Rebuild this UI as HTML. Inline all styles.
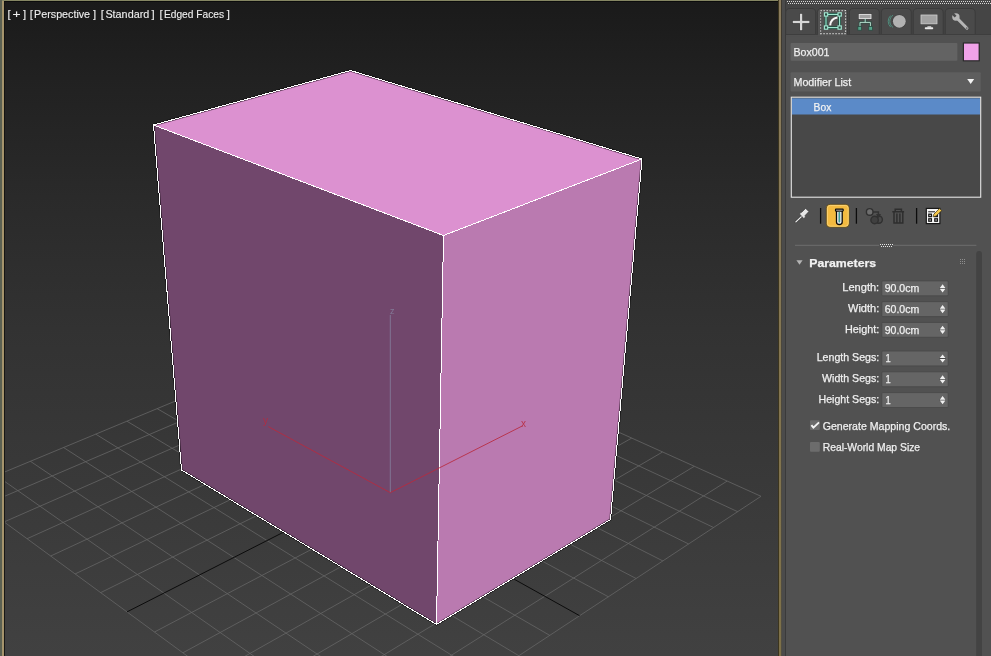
<!DOCTYPE html>
<html><head><meta charset="utf-8"><title>3ds Max - Box</title>
<style>
html,body{margin:0;padding:0;}
body{width:991px;height:656px;overflow:hidden;background:#515151;position:relative;font-family:"Liberation Sans",sans-serif;}
svg{position:absolute;left:0;top:0;display:block;will-change:transform;}
</style></head><body>
<svg id="panel" width="991" height="656" viewBox="0 0 991 656">
<rect x="781.3" y="0" width="3.7" height="656" fill="#4b4b4b"/>
<rect x="785" y="0" width="1" height="656" fill="#3a3a3a"/>
<rect x="786" y="0" width="205" height="656" fill="#515151"/>
<rect x="786" y="0" width="205" height="35" fill="#454545"/>
<g fill="#d8d8d8"><rect x="787" y="1" width="1" height="1"/><rect x="788" y="3" width="1" height="1"/><rect x="789" y="1" width="1" height="1"/><rect x="790" y="3" width="1" height="1"/><rect x="791" y="1" width="1" height="1"/><rect x="792" y="3" width="1" height="1"/><rect x="793" y="1" width="1" height="1"/><rect x="794" y="3" width="1" height="1"/><rect x="795" y="1" width="1" height="1"/><rect x="796" y="3" width="1" height="1"/><rect x="797" y="1" width="1" height="1"/><rect x="798" y="3" width="1" height="1"/><rect x="799" y="1" width="1" height="1"/><rect x="800" y="3" width="1" height="1"/><rect x="801" y="1" width="1" height="1"/><rect x="802" y="3" width="1" height="1"/><rect x="803" y="1" width="1" height="1"/><rect x="804" y="3" width="1" height="1"/><rect x="805" y="1" width="1" height="1"/><rect x="806" y="3" width="1" height="1"/><rect x="807" y="1" width="1" height="1"/><rect x="808" y="3" width="1" height="1"/><rect x="809" y="1" width="1" height="1"/><rect x="810" y="3" width="1" height="1"/><rect x="811" y="1" width="1" height="1"/><rect x="812" y="3" width="1" height="1"/><rect x="813" y="1" width="1" height="1"/><rect x="814" y="3" width="1" height="1"/><rect x="815" y="1" width="1" height="1"/><rect x="816" y="3" width="1" height="1"/><rect x="817" y="1" width="1" height="1"/><rect x="818" y="3" width="1" height="1"/><rect x="819" y="1" width="1" height="1"/><rect x="820" y="3" width="1" height="1"/><rect x="821" y="1" width="1" height="1"/><rect x="822" y="3" width="1" height="1"/><rect x="823" y="1" width="1" height="1"/><rect x="824" y="3" width="1" height="1"/><rect x="825" y="1" width="1" height="1"/><rect x="826" y="3" width="1" height="1"/><rect x="827" y="1" width="1" height="1"/><rect x="828" y="3" width="1" height="1"/><rect x="829" y="1" width="1" height="1"/><rect x="830" y="3" width="1" height="1"/><rect x="831" y="1" width="1" height="1"/><rect x="832" y="3" width="1" height="1"/><rect x="833" y="1" width="1" height="1"/><rect x="834" y="3" width="1" height="1"/><rect x="835" y="1" width="1" height="1"/><rect x="836" y="3" width="1" height="1"/><rect x="837" y="1" width="1" height="1"/><rect x="838" y="3" width="1" height="1"/><rect x="839" y="1" width="1" height="1"/><rect x="840" y="3" width="1" height="1"/><rect x="841" y="1" width="1" height="1"/><rect x="842" y="3" width="1" height="1"/><rect x="843" y="1" width="1" height="1"/><rect x="844" y="3" width="1" height="1"/><rect x="845" y="1" width="1" height="1"/><rect x="846" y="3" width="1" height="1"/><rect x="847" y="1" width="1" height="1"/><rect x="848" y="3" width="1" height="1"/><rect x="849" y="1" width="1" height="1"/><rect x="850" y="3" width="1" height="1"/><rect x="851" y="1" width="1" height="1"/><rect x="852" y="3" width="1" height="1"/><rect x="853" y="1" width="1" height="1"/><rect x="854" y="3" width="1" height="1"/><rect x="855" y="1" width="1" height="1"/><rect x="856" y="3" width="1" height="1"/><rect x="857" y="1" width="1" height="1"/><rect x="858" y="3" width="1" height="1"/><rect x="859" y="1" width="1" height="1"/><rect x="860" y="3" width="1" height="1"/><rect x="861" y="1" width="1" height="1"/><rect x="862" y="3" width="1" height="1"/><rect x="863" y="1" width="1" height="1"/><rect x="864" y="3" width="1" height="1"/><rect x="865" y="1" width="1" height="1"/><rect x="866" y="3" width="1" height="1"/><rect x="867" y="1" width="1" height="1"/><rect x="868" y="3" width="1" height="1"/><rect x="869" y="1" width="1" height="1"/><rect x="870" y="3" width="1" height="1"/><rect x="871" y="1" width="1" height="1"/><rect x="872" y="3" width="1" height="1"/><rect x="873" y="1" width="1" height="1"/><rect x="874" y="3" width="1" height="1"/><rect x="875" y="1" width="1" height="1"/><rect x="876" y="3" width="1" height="1"/><rect x="877" y="1" width="1" height="1"/><rect x="878" y="3" width="1" height="1"/><rect x="879" y="1" width="1" height="1"/><rect x="880" y="3" width="1" height="1"/><rect x="881" y="1" width="1" height="1"/><rect x="882" y="3" width="1" height="1"/><rect x="883" y="1" width="1" height="1"/><rect x="884" y="3" width="1" height="1"/><rect x="885" y="1" width="1" height="1"/><rect x="886" y="3" width="1" height="1"/><rect x="887" y="1" width="1" height="1"/><rect x="888" y="3" width="1" height="1"/><rect x="889" y="1" width="1" height="1"/><rect x="890" y="3" width="1" height="1"/><rect x="891" y="1" width="1" height="1"/><rect x="892" y="3" width="1" height="1"/><rect x="893" y="1" width="1" height="1"/><rect x="894" y="3" width="1" height="1"/><rect x="895" y="1" width="1" height="1"/><rect x="896" y="3" width="1" height="1"/><rect x="897" y="1" width="1" height="1"/><rect x="898" y="3" width="1" height="1"/><rect x="899" y="1" width="1" height="1"/><rect x="900" y="3" width="1" height="1"/><rect x="901" y="1" width="1" height="1"/><rect x="902" y="3" width="1" height="1"/><rect x="903" y="1" width="1" height="1"/><rect x="904" y="3" width="1" height="1"/><rect x="905" y="1" width="1" height="1"/><rect x="906" y="3" width="1" height="1"/><rect x="907" y="1" width="1" height="1"/><rect x="908" y="3" width="1" height="1"/><rect x="909" y="1" width="1" height="1"/><rect x="910" y="3" width="1" height="1"/><rect x="911" y="1" width="1" height="1"/><rect x="912" y="3" width="1" height="1"/><rect x="913" y="1" width="1" height="1"/><rect x="914" y="3" width="1" height="1"/><rect x="915" y="1" width="1" height="1"/><rect x="916" y="3" width="1" height="1"/><rect x="917" y="1" width="1" height="1"/><rect x="918" y="3" width="1" height="1"/><rect x="919" y="1" width="1" height="1"/><rect x="920" y="3" width="1" height="1"/><rect x="921" y="1" width="1" height="1"/><rect x="922" y="3" width="1" height="1"/><rect x="923" y="1" width="1" height="1"/><rect x="924" y="3" width="1" height="1"/><rect x="925" y="1" width="1" height="1"/><rect x="926" y="3" width="1" height="1"/><rect x="927" y="1" width="1" height="1"/><rect x="928" y="3" width="1" height="1"/><rect x="929" y="1" width="1" height="1"/><rect x="930" y="3" width="1" height="1"/><rect x="931" y="1" width="1" height="1"/><rect x="932" y="3" width="1" height="1"/><rect x="933" y="1" width="1" height="1"/><rect x="934" y="3" width="1" height="1"/><rect x="935" y="1" width="1" height="1"/><rect x="936" y="3" width="1" height="1"/><rect x="937" y="1" width="1" height="1"/><rect x="938" y="3" width="1" height="1"/><rect x="939" y="1" width="1" height="1"/><rect x="940" y="3" width="1" height="1"/><rect x="941" y="1" width="1" height="1"/><rect x="942" y="3" width="1" height="1"/><rect x="943" y="1" width="1" height="1"/><rect x="944" y="3" width="1" height="1"/><rect x="945" y="1" width="1" height="1"/><rect x="946" y="3" width="1" height="1"/><rect x="947" y="1" width="1" height="1"/><rect x="948" y="3" width="1" height="1"/><rect x="949" y="1" width="1" height="1"/><rect x="950" y="3" width="1" height="1"/><rect x="951" y="1" width="1" height="1"/><rect x="952" y="3" width="1" height="1"/><rect x="953" y="1" width="1" height="1"/><rect x="954" y="3" width="1" height="1"/><rect x="955" y="1" width="1" height="1"/><rect x="956" y="3" width="1" height="1"/><rect x="957" y="1" width="1" height="1"/><rect x="958" y="3" width="1" height="1"/><rect x="959" y="1" width="1" height="1"/><rect x="960" y="3" width="1" height="1"/><rect x="961" y="1" width="1" height="1"/><rect x="962" y="3" width="1" height="1"/><rect x="963" y="1" width="1" height="1"/><rect x="964" y="3" width="1" height="1"/><rect x="965" y="1" width="1" height="1"/><rect x="966" y="3" width="1" height="1"/><rect x="967" y="1" width="1" height="1"/><rect x="968" y="3" width="1" height="1"/><rect x="969" y="1" width="1" height="1"/><rect x="970" y="3" width="1" height="1"/><rect x="971" y="1" width="1" height="1"/><rect x="972" y="3" width="1" height="1"/><rect x="973" y="1" width="1" height="1"/><rect x="974" y="3" width="1" height="1"/><rect x="975" y="1" width="1" height="1"/><rect x="976" y="3" width="1" height="1"/><rect x="977" y="1" width="1" height="1"/><rect x="978" y="3" width="1" height="1"/><rect x="979" y="1" width="1" height="1"/><rect x="980" y="3" width="1" height="1"/><rect x="981" y="1" width="1" height="1"/><rect x="982" y="3" width="1" height="1"/><rect x="983" y="1" width="1" height="1"/><rect x="984" y="3" width="1" height="1"/><rect x="985" y="1" width="1" height="1"/><rect x="986" y="3" width="1" height="1"/><rect x="987" y="1" width="1" height="1"/><rect x="988" y="3" width="1" height="1"/><rect x="989" y="1" width="1" height="1"/><rect x="990" y="3" width="1" height="1"/></g>
<path d="M785.7 35V12.8Q785.7 8.5 790.0 8.5H811.4000000000001Q815.7 8.5 815.7 12.8V35Z" fill="#4a4a4a" stroke="#3b3b3b" stroke-width="1"/><path d="M817.4 35V12.8Q817.4 8.5 821.6999999999999 8.5H843.1Q847.4 8.5 847.4 12.8V35Z" fill="#535353" stroke="#3b3b3b" stroke-width="1"/><path d="M849.3 35V12.8Q849.3 8.5 853.5999999999999 8.5H875.0Q879.3 8.5 879.3 12.8V35Z" fill="#4a4a4a" stroke="#3b3b3b" stroke-width="1"/><path d="M881.3 35V12.8Q881.3 8.5 885.5999999999999 8.5H907.0Q911.3 8.5 911.3 12.8V35Z" fill="#4a4a4a" stroke="#3b3b3b" stroke-width="1"/><path d="M913.2 35V12.8Q913.2 8.5 917.5 8.5H938.9000000000001Q943.2 8.5 943.2 12.8V35Z" fill="#4a4a4a" stroke="#3b3b3b" stroke-width="1"/><path d="M945.2 35V12.8Q945.2 8.5 949.5 8.5H970.9000000000001Q975.2 8.5 975.2 12.8V35Z" fill="#4a4a4a" stroke="#3b3b3b" stroke-width="1"/>
<rect x="786" y="34" width="205" height="1" fill="#3e3e3e"/><rect x="786" y="35" width="205" height="1.2" fill="#515151"/>
<rect x="817.9" y="33" width="29" height="3.2" fill="#535353"/>
<!-- create + -->
<g stroke="#2e2e2e" stroke-width="3.6" opacity="0.55"><line x1="792.4" y1="22.2" x2="809.8" y2="22.2"/><line x1="801.2" y1="13.6" x2="801.2" y2="30.6"/></g>
<g stroke="#d6d6d6" stroke-width="2.3"><line x1="792.8" y1="22" x2="809.4" y2="22"/><line x1="801.1" y1="13.8" x2="801.1" y2="30.2"/></g>
<!-- modify -->
<rect x="820.6" y="10.6" width="25" height="23" fill="none" stroke="#eaeaea" stroke-width="1.1" stroke-dasharray="1.1 1.9"/>
<g fill="none" stroke="#16503f" stroke-width="2.6"><rect x="826" y="14.4" width="13.6" height="13.2"/></g>
<g fill="none" stroke="#a6ecd6" stroke-width="1.1"><rect x="826" y="14.4" width="13.6" height="13.2"/></g>
<g fill="#2c4a42" stroke="#a6ecd6" stroke-width="1.1"><rect x="824.4" y="12.8" width="3.3" height="3.3"/><rect x="838" y="12.8" width="3.3" height="3.3"/><rect x="824.4" y="25.9" width="3.3" height="3.3"/><rect x="838" y="25.9" width="3.3" height="3.3"/></g>
<path d="M830.2 25.4Q830.8 18.6 837.4 17.6" fill="none" stroke="#f6f6f6" stroke-width="2"/>
<!-- hierarchy -->
<rect x="858.2" y="13.4" width="13.8" height="6.2" fill="#2c2c2c" opacity="0.7"/>
<rect x="859.2" y="14.4" width="11.8" height="4.2" fill="#a2a2a2" stroke="#e2e2e2" stroke-width="1"/>
<path d="M865.2 19V22.3M860 26.6V22.4H870.4V26.6" fill="none" stroke="#234c40" stroke-width="2.4" opacity="0.8"/>
<path d="M865.2 19V22.3M860 26.4V22.4H870.4V26.4" fill="none" stroke="#b4dccc" stroke-width="1"/>
<rect x="857.9" y="26.6" width="3.6" height="3.6" fill="#55a38a" stroke="#27483e" stroke-width="0.7"/><rect x="868.8" y="26.6" width="3.6" height="3.6" fill="#55a38a" stroke="#27483e" stroke-width="0.7"/>
<!-- motion -->
<path d="M893 15.2A7.4 7.4 0 0 0 893 27.4M890.6 15.6A8 8 0 0 0 890.6 27" fill="none" stroke="#4f9482" stroke-width="0.9"/>
<circle cx="899.3" cy="21.3" r="6.9" fill="#333" opacity="0.6"/>
<circle cx="899.3" cy="21.3" r="6.4" fill="#b2b2b2"/>
<!-- display -->
<rect x="920" y="14" width="18" height="10.8" fill="#2e2e2e" opacity="0.6"/>
<rect x="921" y="15" width="16" height="8.8" fill="#a2a2a2" stroke="#c6c6c6" stroke-width="1"/>
<rect x="927.4" y="26.2" width="3.8" height="1.4" fill="#d0d0d0"/><rect x="924.8" y="27.2" width="8.4" height="2" rx="0.8" fill="#eaeaea"/>
<!-- wrench -->
<path d="M957.2 18.4L967 28.2" stroke="#b6b6b6" stroke-width="2.9" stroke-linecap="round"/>
<circle cx="955.9" cy="17" r="3.7" fill="#b6b6b6"/>
<path d="M955.6 16.7L951.6 12.7" stroke="#4a4a4a" stroke-width="2.6"/>
<circle cx="966.8" cy="28" r="0.85" fill="#5e5e5e"/>
<!-- name field / swatch -->
<rect x="790.6" y="43" width="166.8" height="17.8" rx="1" fill="#636363"/>
<rect x="962.8" y="42.4" width="17" height="19" fill="#2a2a2a"/><rect x="964" y="43.6" width="14.6" height="16.6" fill="#f0a2e8"/>
<!-- modifier list -->
<rect x="790.6" y="72.2" width="190.2" height="19.2" rx="1" fill="#5e5e5e"/>
<path d="M967.2 79L974.2 79L970.7 84Z" fill="#f4f4f4"/>
<!-- stack -->
<rect x="791.3" y="97.2" width="189.4" height="100" fill="#484848" stroke="#e6e6e6" stroke-width="1.1"/>
<rect x="792" y="98.3" width="188" height="16.2" fill="#5b8ac8"/>
<!-- toolbar -->
<g stroke="#0c0c0c" stroke-width="1.3"><line x1="820.6" y1="208" x2="820.6" y2="223.7"/><line x1="856.4" y1="208" x2="856.4" y2="223.7"/><line x1="916.6" y1="208" x2="916.6" y2="223.7"/></g>
<rect x="826.4" y="204.4" width="22.8" height="22.8" rx="3.6" fill="#f3ba40" stroke="#4e3d14" stroke-width="0.7"/>
<rect x="827.4" y="205.4" width="20.8" height="20.8" rx="2.8" fill="none" stroke="#fad578" stroke-width="0.9"/>
<path d="M836.5 210.4V222Q836.5 224.5 839.35 224.5Q842.2 224.5 842.2 222V210.4Z" fill="#f6f6f6" stroke="#0a0a0a" stroke-width="1.3"/>
<rect x="835.5" y="209.2" width="7.7" height="1.9" rx="0.5" fill="#e8e8e8" stroke="#0a0a0a" stroke-width="1.2"/>
<rect x="838.45" y="211.8" width="1.8" height="10.8" rx="0.9" fill="#3f9a94"/>
<!-- pin -->
<path d="M795.9 221.9L801.4 216.6" stroke="#2c2c2c" stroke-width="2.6" stroke-linecap="round" opacity="0.5"/>
<path d="M795.9 221.9L801.4 216.6" stroke="#eeeeee" stroke-width="1.3" stroke-linecap="round"/>
<path d="M799.6 214L803.8 218.6L805.4 217L805 215.6L808.8 211.6L805.6 208.4L801.8 212.2L800.8 212.4Z" fill="#e6e6e6" stroke="#3a3a3a" stroke-width="0.6"/>
<!-- make unique -->
<circle cx="878.8" cy="219.6" r="3.6" fill="#494949" stroke="#303030" stroke-width="1.4"/>
<circle cx="874.6" cy="220" r="3.7" fill="#404040" stroke="#303030" stroke-width="1.4"/>
<path d="M873 212H878.4V214.6" fill="none" stroke="#323232" stroke-width="1.5"/><path d="M876 214H881L878.5 218.2Z" fill="#323232"/>
<circle cx="869.7" cy="211.9" r="3.3" fill="#6e6e6e" stroke="#303030" stroke-width="1.4"/>
<!-- trash -->
<g fill="none" stroke="#2e2e2e" stroke-width="1.5"><path d="M892.3 211.7H904.1M895.2 211.4V209.2H901.4V211.4M894 212.6V223H902.8V212.6M896.9 213.4V222.4M899.9 213.4V222.4"/></g>
<!-- configure -->
<rect x="926.3" y="208.4" width="13.6" height="15.2" fill="#f8f8f8" stroke="#181818" stroke-width="1.2"/>
<line x1="928.2" y1="211.8" x2="935" y2="211.8" stroke="#181818" stroke-width="1"/>
<g fill="#fafafa" stroke="#181818" stroke-width="1.3"><rect x="928.8" y="214.2" width="2.6" height="2.4"/><rect x="934.8" y="214.2" width="2.6" height="2.4"/><rect x="928.8" y="218.8" width="2.6" height="2.4"/><rect x="934.8" y="218.8" width="2.6" height="2.4"/></g>
<path d="M933 216.8L933.8 214.2L939.4 208.6L941.8 210.6L936 216Z" fill="#f4c84c" stroke="#3e3010" stroke-width="0.7"/>
<!-- divider -->
<rect x="795" y="244.8" width="84" height="1" fill="#6d6d6d"/><rect x="893.2" y="244.8" width="83.2" height="1" fill="#6d6d6d"/>
<g fill="#e4e4e4"><rect x="880" y="244" width="1" height="1"/><rect x="882" y="244" width="1" height="1"/><rect x="884" y="244" width="1" height="1"/><rect x="886" y="244" width="1" height="1"/><rect x="888" y="244" width="1" height="1"/><rect x="890" y="244" width="1" height="1"/><rect x="892" y="244" width="1" height="1"/><rect x="881" y="246" width="1" height="1"/><rect x="883" y="246" width="1" height="1"/><rect x="885" y="246" width="1" height="1"/><rect x="887" y="246" width="1" height="1"/><rect x="889" y="246" width="1" height="1"/><rect x="891" y="246" width="1" height="1"/></g>
<!-- scrollbar track -->
<rect x="976.2" y="251" width="5.8" height="420" rx="2.9" fill="#434343"/>
<!-- rollout header -->
<path d="M796.4 260.2H802.6L799.5 264.8Z" fill="#b4b4b4"/>
<g fill="#8e8e8e"><rect x="960" y="259" width="1" height="1"/><rect x="962" y="259" width="1" height="1"/><rect x="964" y="259" width="1" height="1"/><rect x="960" y="261" width="1" height="1"/><rect x="962" y="261" width="1" height="1"/><rect x="964" y="261" width="1" height="1"/><rect x="960" y="263" width="1" height="1"/><rect x="962" y="263" width="1" height="1"/><rect x="964" y="263" width="1" height="1"/></g>
<rect x="881.8" y="280.9" width="66.4" height="14.9" rx="1" fill="#656565" stroke="#484848" stroke-width="0.8"/><rect x="939.4" y="287.90" width="6.4" height="1" fill="#3e3e3e" opacity="0.8"/><path d="M939.8 288.00L942.6 284.30L945.4 288.00Z M939.8 288.80L942.6 292.50L945.4 288.80Z" fill="#f0f0f0"/><rect x="881.8" y="301.65" width="66.4" height="14.9" rx="1" fill="#656565" stroke="#484848" stroke-width="0.8"/><rect x="939.4" y="308.65" width="6.4" height="1" fill="#3e3e3e" opacity="0.8"/><path d="M939.8 308.75L942.6 305.05L945.4 308.75Z M939.8 309.55L942.6 313.25L945.4 309.55Z" fill="#f0f0f0"/><rect x="881.8" y="322.4" width="66.4" height="14.9" rx="1" fill="#656565" stroke="#484848" stroke-width="0.8"/><rect x="939.4" y="329.40" width="6.4" height="1" fill="#3e3e3e" opacity="0.8"/><path d="M939.8 329.50L942.6 325.80L945.4 329.50Z M939.8 330.30L942.6 334.00L945.4 330.30Z" fill="#f0f0f0"/><rect x="881.8" y="351" width="66.4" height="14.9" rx="1" fill="#656565" stroke="#484848" stroke-width="0.8"/><rect x="939.4" y="358.00" width="6.4" height="1" fill="#3e3e3e" opacity="0.8"/><path d="M939.8 358.10L942.6 354.40L945.4 358.10Z M939.8 358.90L942.6 362.60L945.4 358.90Z" fill="#f0f0f0"/><rect x="881.8" y="371.8" width="66.4" height="14.9" rx="1" fill="#656565" stroke="#484848" stroke-width="0.8"/><rect x="939.4" y="378.80" width="6.4" height="1" fill="#3e3e3e" opacity="0.8"/><path d="M939.8 378.90L942.6 375.20L945.4 378.90Z M939.8 379.70L942.6 383.40L945.4 379.70Z" fill="#f0f0f0"/><rect x="881.8" y="392.6" width="66.4" height="14.9" rx="1" fill="#656565" stroke="#484848" stroke-width="0.8"/><rect x="939.4" y="399.60" width="6.4" height="1" fill="#3e3e3e" opacity="0.8"/><path d="M939.8 399.70L942.6 396.00L945.4 399.70Z M939.8 400.50L942.6 404.20L945.4 400.50Z" fill="#f0f0f0"/>
<!-- checkboxes -->
<rect x="810" y="420.2" width="9.8" height="9.8" rx="1" fill="#6c6c6c"/>
<path d="M811.4 425.2L813.4 427.6L819 422.4" fill="none" stroke="#f6f6f6" stroke-width="1.9"/>
<rect x="810" y="442" width="9.8" height="9.8" rx="1" fill="#6c6c6c"/>
<g font-family="Liberation Sans, sans-serif" font-size="10.8" fill="#f2f2f2" stroke="#f2f2f2" stroke-width="0.25" opacity="0.99"><text x="793.5" y="55.9" textLength="36" lengthAdjust="spacingAndGlyphs" text-anchor="start" >Box001</text><text x="793.5" y="85.8" textLength="57.7" lengthAdjust="spacingAndGlyphs" text-anchor="start" >Modifier List</text><text x="813.6" y="110.7" textLength="17.7" lengthAdjust="spacingAndGlyphs" text-anchor="start" >Box</text><text x="809.2" y="266.8" textLength="66.9" lengthAdjust="spacingAndGlyphs" text-anchor="start" font-weight="bold" font-size="11.2" fill="#f4f4f4">Parameters</text><text x="879.2" y="291.2" textLength="36.9" lengthAdjust="spacingAndGlyphs" text-anchor="end" >Length:</text><text x="879.2" y="311.95" textLength="31.2" lengthAdjust="spacingAndGlyphs" text-anchor="end" >Width:</text><text x="879.2" y="332.7" textLength="34.3" lengthAdjust="spacingAndGlyphs" text-anchor="end" >Height:</text><text x="879.2" y="361.1" textLength="62.5" lengthAdjust="spacingAndGlyphs" text-anchor="end" >Length Segs:</text><text x="879.2" y="382" textLength="57.1" lengthAdjust="spacingAndGlyphs" text-anchor="end" >Width Segs:</text><text x="879.2" y="402.9" textLength="60.7" lengthAdjust="spacingAndGlyphs" text-anchor="end" >Height Segs:</text><text x="884.7" y="292.2" textLength="34.6" lengthAdjust="spacingAndGlyphs" text-anchor="start" >90.0cm</text><text x="884.7" y="312.95" textLength="34.6" lengthAdjust="spacingAndGlyphs" text-anchor="start" >60.0cm</text><text x="884.7" y="333.7" textLength="34.6" lengthAdjust="spacingAndGlyphs" text-anchor="start" >90.0cm</text><text x="885.4" y="362.1" textLength="5.2" lengthAdjust="spacingAndGlyphs" text-anchor="start" >1</text><text x="885.4" y="383.0" textLength="5.2" lengthAdjust="spacingAndGlyphs" text-anchor="start" >1</text><text x="885.4" y="403.9" textLength="5.2" lengthAdjust="spacingAndGlyphs" text-anchor="start" >1</text><text x="822.7" y="429.8" textLength="127.6" lengthAdjust="spacingAndGlyphs" text-anchor="start" >Generate Mapping Coords.</text><text x="822.7" y="451.2" textLength="97.4" lengthAdjust="spacingAndGlyphs" text-anchor="start" >Real-World Map Size</text></g>
</svg>
<svg id="vp" width="782" height="656" viewBox="0 0 782 656">
<defs>
<linearGradient id="bg" x1="0" y1="0" x2="0" y2="1"><stop offset="0.0" stop-color="#1a1a1a"/><stop offset="0.1" stop-color="#202020"/><stop offset="0.2" stop-color="#252525"/><stop offset="0.3" stop-color="#2a2a2a"/><stop offset="0.4" stop-color="#2e2e2e"/><stop offset="0.5" stop-color="#323232"/><stop offset="0.6" stop-color="#353535"/><stop offset="0.7" stop-color="#383838"/><stop offset="0.8" stop-color="#3b3b3b"/><stop offset="0.9" stop-color="#3e3e3e"/><stop offset="1.0" stop-color="#414141"/></linearGradient>
<linearGradient id="rb" x1="0" y1="0" x2="0" y2="1"><stop offset="0" stop-color="#8a7c5e"/><stop offset="1" stop-color="#7d7048"/></linearGradient>
<clipPath id="vc"><rect x="5" y="2" width="774" height="654"/></clipPath>
</defs>
<rect x="0" y="0" width="782" height="656" fill="url(#bg)"/>
<g clip-path="url(#vc)">
<g stroke="#666666" stroke-width="0.8" fill="none"><line x1="370.0" y1="320.2" x2="-39.2" y2="490.2"/><line x1="370.0" y1="320.2" x2="761.0" y2="496.3"/><line x1="392.9" y1="330.6" x2="-17.8" y2="505.8"/><line x1="345.9" y1="330.3" x2="737.7" y2="511.7"/><line x1="416.5" y1="341.2" x2="4.2" y2="521.9"/><line x1="321.1" y1="340.5" x2="713.6" y2="527.5"/><line x1="440.7" y1="352.1" x2="27.1" y2="538.7"/><line x1="295.7" y1="351.1" x2="688.7" y2="544.0"/><line x1="465.7" y1="363.3" x2="50.7" y2="556.0"/><line x1="269.6" y1="362.0" x2="662.8" y2="560.9"/><line x1="491.3" y1="374.9" x2="75.2" y2="573.9"/><line x1="242.6" y1="373.1" x2="636.1" y2="578.5"/><line x1="517.7" y1="386.8" x2="100.7" y2="592.6"/><line x1="215.0" y1="384.6" x2="608.4" y2="596.8"/><line x1="573.0" y1="411.7" x2="154.5" y2="632.0"/><line x1="157.1" y1="408.6" x2="549.8" y2="635.4"/><line x1="601.9" y1="424.7" x2="182.9" y2="652.8"/><line x1="126.9" y1="421.2" x2="518.8" y2="655.7"/><line x1="631.7" y1="438.1" x2="212.6" y2="674.5"/><line x1="95.7" y1="434.1" x2="486.6" y2="676.9"/><line x1="662.5" y1="452.0" x2="243.4" y2="697.1"/><line x1="63.6" y1="447.5" x2="453.1" y2="699.0"/><line x1="694.3" y1="466.3" x2="275.5" y2="720.7"/><line x1="30.4" y1="461.3" x2="418.2" y2="722.0"/><line x1="727.1" y1="481.1" x2="309.0" y2="745.2"/><line x1="-3.8" y1="475.5" x2="381.9" y2="745.9"/><line x1="761.0" y1="496.3" x2="344.0" y2="770.8"/><line x1="-39.2" y1="490.2" x2="344.0" y2="770.8"/></g>
<g stroke="#0c0c0c" stroke-width="1" fill="none"><line x1="544.9" y1="399.0" x2="127.0" y2="611.9"/><line x1="186.5" y1="396.5" x2="579.6" y2="615.7"/></g>
<polygon points="153.5,125 350.5,70.5 642,159 443.5,235.5" fill="#dc91d0"/>
<polygon points="153.5,125 443.5,235.5 436.5,624.5 181.5,470" fill="#71476c"/>
<polygon points="443.5,235.5 642,159 610.5,519.5 436.5,624.5" fill="#ba7ab0"/>
<polygon points="153.5,125 350.5,70.5 642,159 610.5,519.5 436.5,624.5 181.5,470" fill="none" stroke="#000" stroke-opacity="0.5" stroke-width="2.4" stroke-linejoin="round"/>
<g stroke="#ffffff" stroke-width="1" fill="none" stroke-linejoin="round" stroke-linecap="round" shape-rendering="crispEdges">
<polygon points="153.5,125 350.5,70.5 642,159 610.5,519.5 436.5,624.5 181.5,470"/>
<polyline points="153.5,125 443.5,235.5 642,159"/>
<line x1="443.5" y1="235.5" x2="436.5" y2="624.5"/>
</g>
<g opacity="0.85"><line x1="390.3" y1="492.7" x2="390.3" y2="315" stroke="#86839f" stroke-width="0.9"/>
<line x1="390.3" y1="492.7" x2="523" y2="425.6" stroke="#b82a3e" stroke-width="1"/>
<line x1="390.3" y1="492.7" x2="268.3" y2="426.6" stroke="#b82a3e" stroke-width="1"/>
<text x="521" y="427" font-family="Liberation Sans, sans-serif" font-size="10" fill="#b82a3e">x</text>
<text x="263" y="424" font-family="Liberation Sans, sans-serif" font-size="10" fill="#b82a3e">y</text>
<text x="390" y="314" font-family="Liberation Sans, sans-serif" font-size="9" fill="#86839f">z</text></g>
</g>
<rect x="0" y="0" width="2" height="656" fill="#5c6152"/>
<rect x="2" y="0" width="2.2" height="656" fill="#a5946c"/>
<rect x="4.2" y="1" width="0.8" height="656" fill="#0a0a0a"/>
<rect x="2" y="0" width="779" height="1" fill="#858663"/>
<rect x="4.2" y="1" width="775" height="1" fill="#0c0c0c"/>
<rect x="778" y="0" width="1" height="656" fill="#3c351e"/><rect x="779" y="0" width="2.3" height="656" fill="url(#rb)"/>
<g font-family="Liberation Sans, sans-serif" font-size="11.3" fill="#f0f0f0" stroke="#f0f0f0" stroke-width="0.12" opacity="0.99"><text y="17.9"><tspan x="7.4">[</tspan><tspan x="12.6" textLength="8.1" lengthAdjust="spacingAndGlyphs">+</tspan><tspan x="22.9">]</tspan></text><text y="17.9"><tspan x="29.7">[</tspan><tspan x="34.1" textLength="56" lengthAdjust="spacingAndGlyphs">Perspective</tspan><tspan x="93">]</tspan></text><text y="17.9"><tspan x="100.7">[</tspan><tspan x="105.4" textLength="43.9" lengthAdjust="spacingAndGlyphs">Standard</tspan><tspan x="151.5">]</tspan></text><text y="17.9"><tspan x="159.6">[</tspan><tspan x="164" textLength="60" lengthAdjust="spacingAndGlyphs">Edged Faces</tspan><tspan x="226.7">]</tspan></text></g>
</svg>
</body></html>
